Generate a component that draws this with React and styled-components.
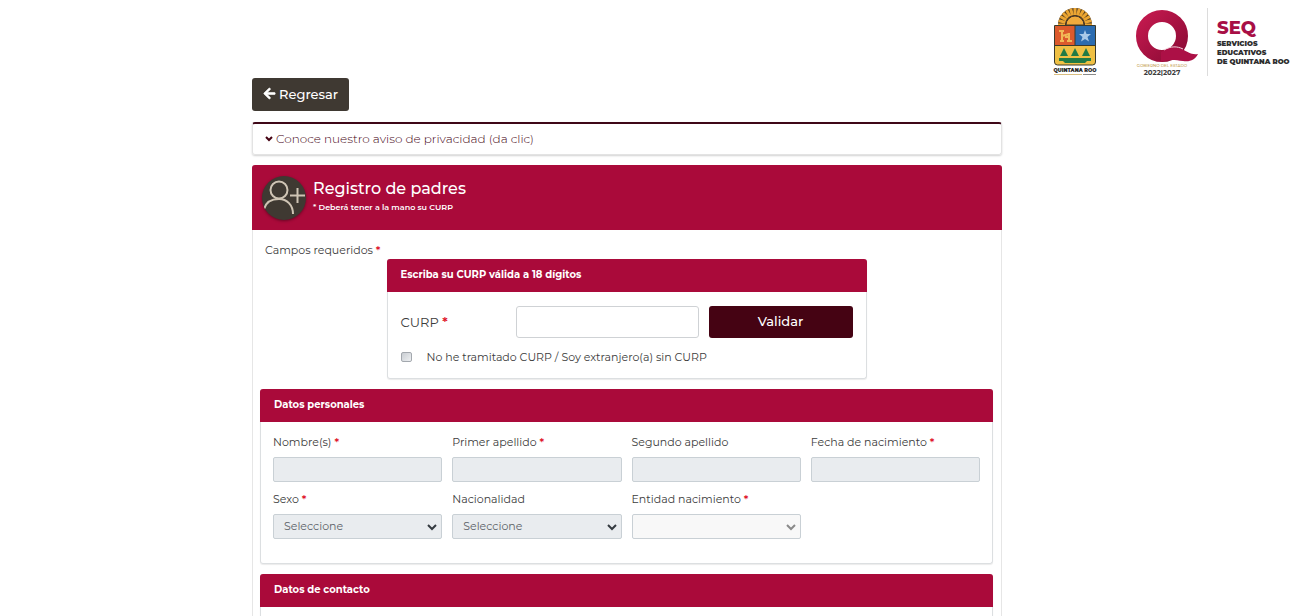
import React from 'react';
import styled, { createGlobalStyle } from 'styled-components';
import { FaArrowLeft } from 'react-icons/fa';

const GlobalStyle = createGlobalStyle`
  *, *::before, *::after {
    box-sizing: border-box;
  }

  body {
    margin: 0;
    background: #ffffff;
    color: #3c3c3c;
    font-family: Montserrat, Inter, 'Open Sans', sans-serif;
    font-size: 11px;
    line-height: 18px;
  }

  button, input, select {
    font: inherit;
  }
`;

const Screen = styled.div`
  height: 100vh;
  overflow-y: auto;
  scrollbar-width: none;
`;

const TopBar = styled.header`
  display: flex;
  justify-content: flex-end;
  align-items: flex-start;
  height: 78px;
  padding: 8px 4px 0 0;
`;

const Crest = styled.svg`
  width: 48px;
  height: 70px;
  margin-right: 36px;
`;

const QLogo = styled.svg`
  width: 66px;
  height: 70px;
`;

const Agency = styled.div`
  display: flex;
  flex-direction: column;
  min-width: 88px;
  height: 68px;
  margin-left: 6px;
  padding: 11px 0 0 9px;
  border-left: 1px solid #dcdcdc;
  color: #2e2e2e;
  font-size: 7px;
  font-weight: 900;
  line-height: 9px;
`;

const AgencyShort = styled.strong`
  color: #a80f46;
  font-size: 18px;
  font-weight: 800;
  line-height: 18px;
  margin-bottom: 2px;
`;

const Main = styled.main`
  max-width: 795px;
  margin: 0 auto;
  padding-right: 45px;
`;

const BackButton = styled.button`
  display: inline-flex;
  align-items: center;
  gap: 3px;
  height: 33px;
  padding: 0 11px 2px;
  border: 0;
  border-radius: 3px;
  background: #3f3932;
  color: #ffffff;
  font-size: 13px;
  font-weight: 500;
  cursor: pointer;
`;

const Notice = styled.section`
  margin: 11px 0 10px;
  border: 1px solid #e3e3e3;
  border-top: 2px solid #3f0818;
  border-radius: 3px;
  box-shadow: 0 1px 2px rgba(0, 0, 0, 0.18);
`;

const NoticeLink = styled.a`
  display: flex;
  align-items: center;
  gap: 3px;
  padding: 6px 12px;
  color: #450313;
  font-size: 12px;
  font-weight: 300;
  text-decoration: none;
`;

const Panel = styled.section`
  border: 1px solid #e6e6e6;
  border-top: 0;
  border-radius: 3px 3px 0 0;
`;

const PanelHeader = styled.header`
  display: flex;
  align-items: center;
  gap: 7px;
  height: 65px;
  margin: 0 -1px;
  padding: 0 10px;
  border-radius: 3px 3px 0 0;
  background: #aa0a3a;
  color: #ffffff;
`;

const Avatar = styled.svg`
  width: 44px;
  height: 44px;
  border-radius: 50%;
  background: #3f3932;
  box-shadow: 0 1px 3px rgba(0, 0, 0, 0.4);
`;

const Heading = styled.div`
  padding-bottom: 3px;
`;

const Title = styled.h1`
  margin: 0;
  font-size: 16px;
  font-weight: 500;
  line-height: 22px;
`;

const Subtitle = styled.p`
  margin: 0;
  font-size: 8px;
  font-weight: 600;
  line-height: 14px;
`;

const PanelBody = styled.div`
  padding: 11px 8px 12px 7px;
`;

const RequiredNote = styled.p`
  margin: 0 5px;
`;

const Star = styled.span`
  color: #e0162b;
  font-weight: 600;
`;

const Card = styled.section`
  width: 100%;
  max-width: ${props => props.$maxWidth || 'none'};
  margin: 0 auto 10px;
  border: 1px solid #dcdfe1;
  border-top: 0;
  border-radius: 3px;
  box-shadow: 0 1px 1px rgba(0, 0, 0, 0.08);
`;

const CardTitle = styled.h2`
  margin: 0 -1px;
  padding: 7px 14px 8px;
  border-radius: 3px 3px 0 0;
  background: #aa0a3a;
  color: #ffffff;
  font-size: 10px;
  font-weight: 700;
  line-height: 18px;
`;

const CurpForm = styled.form`
  padding: 14px 13px 12px;
`;

const CurpRow = styled.div`
  display: grid;
  grid-template-columns: 105fr 183fr 144fr;
  gap: 10px;
  align-items: center;
`;

const CurpLabel = styled.label`
  font-size: 13px;
`;

const CurpInput = styled.input`
  width: 100%;
  height: 32px;
  padding: 0 10px;
  border: 1px solid #cfd2d5;
  border-radius: 3px;
  background: #ffffff;
`;

const SubmitButton = styled.button`
  height: 32px;
  padding: 0 0 2px;
  border: 0;
  border-radius: 3px;
  background: #450313;
  color: #ffffff;
  font-size: 13px;
  font-weight: 500;
  cursor: pointer;
`;

const CheckRow = styled.label`
  display: flex;
  align-items: center;
  gap: 15px;
  margin-top: 10px;
`;

const Checkbox = styled.input`
  appearance: none;
  width: 11px;
  height: 10px;
  margin: 0;
  border: 1px solid #a3a8ae;
  border-radius: 2px;
  background: linear-gradient(135deg, #c9cdd2, #eef0f2);
`;

const FieldGrid = styled.div`
  display: grid;
  grid-template-columns: repeat(4, 1fr);
  gap: 8px 10px;
  padding: 11px 12px 24px;
`;

const Field = styled.div`
  display: flex;
  flex-direction: column;
  gap: 6px;
`;

const TextInput = styled.input`
  width: 100%;
  height: 25px;
  padding: 0 10px;
  border: 1px solid #c9d0d5;
  border-radius: 2px;
  background: #e9ecef;
`;

const SelectBox = styled.div`
  display: grid;
  align-items: center;

  > * {
    grid-area: 1 / 1;
  }
`;

const Select = styled.select`
  appearance: none;
  width: 100%;
  height: 25px;
  padding: 0 24px 2px 10px;
  border: 1px solid #c9d0d5;
  border-radius: 2px;
  background: ${props => (props.$plain ? '#f8f8f8' : '#e9ecef')};
  color: #5c6268;
  opacity: 1;
`;

const Chevron = styled.svg`
  width: 10px;
  height: 8px;
  margin-right: 5px;
  justify-self: end;
  pointer-events: none;
  fill: none;
  stroke: ${props => (props.$muted ? '#8a8a8a' : '#343a40')};
  stroke-width: 2;
`;

const ContactBody = styled.div`
  min-height: 32px;
`;

const personalFields = [
  { id: 'nombre', label: 'Nombre(s)', required: true },
  { id: 'primerApellido', label: 'Primer apellido', required: true },
  { id: 'segundoApellido', label: 'Segundo apellido' },
  { id: 'fechaNacimiento', label: 'Fecha de nacimiento', required: true },
  { id: 'sexo', label: 'Sexo', required: true, type: 'select', placeholder: 'Seleccione' },
  { id: 'nacionalidad', label: 'Nacionalidad', type: 'select', placeholder: 'Seleccione' },
  { id: 'entidad', label: 'Entidad nacimiento', required: true, type: 'select', placeholder: '', plain: true },
];

const rays = Array.from({ length: 13 }, (_, i) => (i * 180) / 12);

const StateCrest = () => (
  <Crest viewBox="0 0 48 70" role="img" aria-label="Quintana Roo">
    <path d="M7 17a17 17 0 0 1 34 0z" fill="#4d3a22" />
    <g stroke="#eba532" strokeWidth="3">
      {rays.map(angle => (
        <line key={angle} x1="7" y1="17" x2="14" y2="17" transform={`rotate(${angle} 24 17)`} />
      ))}
    </g>
    <path d="M15 17a9 9 0 0 1 18 0z" fill="#f0ab3c" stroke="#4a3826" />
    <path d="M3.500 17.500h41V54q0 3-3 3h-35q-3 0-3-3z" fill="#efc044" stroke="#3a3a2c" />
    <path d="M4 18h20v19H4z" fill="#dc5a2c" />
    <path d="M24 18h20v19H24z" fill="#2c6cb0" />
    <path d="M24 18v19M4 37.500h40" stroke="#3a3a2c" />
    <path d="M11 23v10M18 25v9M8 23h5M9 33h4M11 28l7-2M16 33h5M14 29h4" fill="none" stroke="#f1b957" strokeWidth="2" />
    <path d="M34 22l1.500 4h4.500l-3.500 3 1.500 4.500-4-2.500-4 2.500 1.500-4.500-3.500-3h4.500z" fill="#a9c9e8" />
    <path d="M13 40l4 8H9zM24 40l4 8h-8zM35 40l4 8h-8z" fill="#217b45" />
    <path d="M8 50h32v3h-4l-2 2H14l-2-2H8z" fill="#217b45" />
    <text x="24" y="64" textAnchor="middle" fontSize="5" fontWeight="900" fill="#2c2c2c">QUINTANA ROO</text>
    <path d="M3 66.500h28" stroke="#d8bd80" />
    <path d="M32 66.500h13" stroke="#8a8a8a" />
  </Crest>
);

const QMark = () => (
  <QLogo viewBox="0 0 66 70" role="img" aria-label="Gobierno del Estado 2022-2027">
    <defs>
      <linearGradient id="ring" x1="0" y1="0" x2="1" y2="1">
        <stop offset="0" stopColor="#c3194e" />
        <stop offset="1" stopColor="#8d0b36" />
      </linearGradient>
    </defs>
    <circle cx="27" cy="28" r="20" fill="none" stroke="url(#ring)" strokeWidth="12" />
    <path
      d="M26 44c7-5 14-6 21-3 6 3 9 6 16 5-3 6-8 8-15 7-8-1-14-2-22 1z"
      fill="#ac1046"
    />
    <path d="M29 42c7-4 13-4 19-1" fill="none" stroke="#f3d3dc" />
    <text x="27" y="59" textAnchor="middle" fontSize="4" fontWeight="500" fill="#c39a4c">GOBIERNO DEL ESTADO</text>
    <text x="27" y="67" textAnchor="middle" fontSize="7" fontWeight="700" fill="#3c3c3c">2022|2027</text>
  </QLogo>
);

const FormField = ({ id, label, required, type, placeholder, plain }) => (
  <Field>
    <label htmlFor={id}>
      {label} {required && <Star>*</Star>}
    </label>
    {type === 'select' ? (
      <SelectBox>
        <Select id={id} disabled $plain={plain}>
          <option>{placeholder}</option>
        </Select>
        <Chevron viewBox="0 0 10 8" $muted={plain} aria-hidden="true">
          <path d="M1 2l4 4 4-4" />
        </Chevron>
      </SelectBox>
    ) : (
      <TextInput id={id} type="text" disabled />
    )}
  </Field>
);

const App = () => (
  <Screen>
    <GlobalStyle />
    <TopBar>
      <StateCrest />
      <QMark />
      <Agency>
        <AgencyShort>SEQ</AgencyShort>
        <span>SERVICIOS</span>
        <span>EDUCATIVOS</span>
        <span>DE QUINTANA ROO</span>
      </Agency>
    </TopBar>
    <Main>
      <BackButton type="button">
        <FaArrowLeft size={13} stroke="#ffffff" strokeWidth={24} aria-hidden="true" />
        Regresar
      </BackButton>
      <Notice>
        <NoticeLink href="#aviso">
          <svg width="8" height="8" viewBox="0 0 8 8" fill="none" stroke="#450313" strokeWidth="2" aria-hidden="true">
            <path d="M1 2l3 3 3-3" />
          </svg>
          Conoce nuestro aviso de privacidad (da clic)
        </NoticeLink>
      </Notice>
      <Panel>
        <PanelHeader>
          <Avatar viewBox="0 0 44 44" fill="none" stroke="#cfc4b4" strokeWidth="2" aria-hidden="true">
            <circle cx="17" cy="14" r="8.500" />
            <path d="M2 33c2-7 8-10 15-10 8 0 14 6 14 15M28 19.500h15M35.500 12v15" />
          </Avatar>
          <Heading>
            <Title>Registro de padres</Title>
            <Subtitle>* Deberá tener a la mano su CURP</Subtitle>
          </Heading>
        </PanelHeader>
        <PanelBody>
          <RequiredNote>Campos requeridos <Star>*</Star></RequiredNote>
          <Card $maxWidth="480px">
            <CardTitle>Escriba su CURP válida a 18 dígitos</CardTitle>
            <CurpForm onSubmit={event => event.preventDefault()}>
              <CurpRow>
                <CurpLabel htmlFor="curp">CURP <Star>*</Star></CurpLabel>
                <CurpInput id="curp" type="text" maxLength={18} />
                <SubmitButton type="submit">Validar</SubmitButton>
              </CurpRow>
              <CheckRow>
                <Checkbox type="checkbox" />
                No he tramitado CURP / Soy extranjero(a) sin CURP
              </CheckRow>
            </CurpForm>
          </Card>
          <Card>
            <CardTitle>Datos personales</CardTitle>
            <FieldGrid>
              {personalFields.map(field => (
                <FormField key={field.id} {...field} />
              ))}
            </FieldGrid>
          </Card>
          <Card>
            <CardTitle>Datos de contacto</CardTitle>
            <ContactBody />
          </Card>
        </PanelBody>
      </Panel>
    </Main>
  </Screen>
);

export default App;
